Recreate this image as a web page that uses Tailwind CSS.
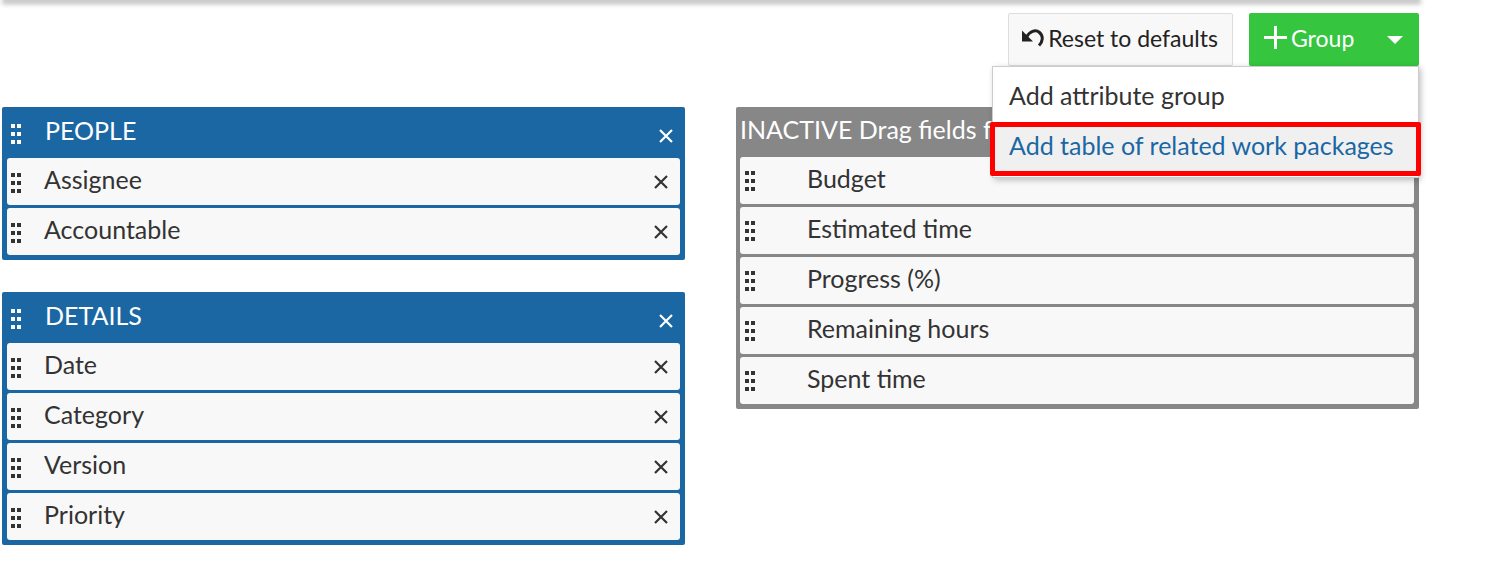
<!DOCTYPE html>
<html lang="en">
<head>
<meta charset="utf-8">
<title>Form configuration</title>
<script src="https://cdn.jsdelivr.net/npm/@tailwindcss/browser@4"></script>
</head>
<body class="bg-white font-['Lato',sans-serif] text-[25px] leading-[30px] text-[#333333]">
<svg class="hidden" aria-hidden="true">
  <symbol id="grip" viewBox="0 0 10 20"><path fill="currentColor" d="M0 0h4v4H0zM6 0h4v4H6zM0 8h4v4H0zM6 8h4v4H6zM0 16h4v4H0zM6 16h4v4H6z"/></symbol>
  <symbol id="close" viewBox="0 0 14 14"><path d="M1 1l12 12M13 1L1 13" fill="none" stroke="currentColor" stroke-width="2.2"/></symbol>
</svg>
<div class="ml-1 mr-[81px] h-px bg-[#cccccc] shadow-[0_1px_5px_2px_rgba(0,0,0,0.28)]"></div>
<main class="pl-[2px] pr-[81px] pt-3">
  <div class="flex justify-end gap-4">
    <button class="flex h-[53px] items-center gap-1 rounded-xs border border-[#dddddd] bg-[#f8f8f8] pl-[13px] pr-[14px] pb-1 text-[23px] text-[#222222]">
      <svg class="h-[18px] w-[22px]" viewBox="0 0 22 18" aria-hidden="true"><path d="M0 1.500V12.500H11z" fill="currentColor"/><path d="M4.500 8C7.500 2.500 13.500 0 17.500 3.500C21.500 7 21 12.500 17 16.500" fill="none" stroke="currentColor" stroke-width="3"/></svg>
      Reset to defaults
    </button>
    <div class="relative">
      <button class="flex h-[53px] w-[170px] items-center rounded-xs bg-[#35c53f] px-[15px] pb-1 text-[23px] text-white" aria-haspopup="menu" aria-expanded="true">
        <svg class="mr-1 size-[23px]" viewBox="0 0 23 23" aria-hidden="true"><path d="M11.500 0v23M0 11.500h23" stroke="currentColor" stroke-width="3"/></svg>
        Group
        <svg class="ml-auto mr-px mt-1 h-2 w-4" viewBox="0 0 16 8" aria-hidden="true"><path d="M0 0h16L8 8z" fill="currentColor"/></svg>
      </button>
      <div role="menu" class="absolute right-0 top-full z-10 w-[427px] border border-[#cccccc] bg-white pb-px shadow-[2px_2px_6px_rgba(0,0,0,0.25)]">
        <button role="menuitem" class="block h-[55px] w-full whitespace-nowrap px-4 pb-px pt-[2px] text-left">Add attribute group</button>
        <button role="menuitem" class="-mx-[3px] block h-[54px] w-[431px] whitespace-nowrap rounded-xs border-[5px] border-[#ff0000] bg-[#f0f0f0] px-[14px] pb-2 text-left text-[#1a67a3]">Add table of related work packages</button>
      </div>
    </div>
  </div>
  <div class="mt-[41px] grid grid-cols-2 items-start gap-[51px]">
    <div class="flex flex-col gap-8">
      <section class="rounded-xs bg-[#1a67a3] px-[5px] pb-[5px]">
        <header class="flex h-[51px] items-center pl-1 pr-[7px] text-white">
          <svg class="mt-[3px] h-5 w-[10px]"><use href="#grip"/></svg>
          <h2 class="ml-6 mb-[6px]">PEOPLE</h2>
          <button class="ml-auto mt-[6px]" aria-label="Remove group People"><svg class="size-[14px]"><use href="#close"/></svg></button>
        </header>
        <ul class="flex flex-col gap-[3px]">
          <li class="flex h-[47px] items-center rounded-[3px] bg-[#f8f8f8] pl-1 pr-3"><svg class="mt-[3px] h-5 w-[10px]"><use href="#grip"/></svg><span class="ml-[23px] mb-[6px]">Assignee</span><button class="ml-auto" aria-label="Remove Assignee"><svg class="size-[14px]"><use href="#close"/></svg></button></li>
          <li class="flex h-[47px] items-center rounded-[3px] bg-[#f8f8f8] pl-1 pr-3"><svg class="mt-[3px] h-5 w-[10px]"><use href="#grip"/></svg><span class="ml-[23px] mb-[6px]">Accountable</span><button class="ml-auto" aria-label="Remove Accountable"><svg class="size-[14px]"><use href="#close"/></svg></button></li>
        </ul>
      </section>
      <section class="rounded-xs bg-[#1a67a3] px-[5px] pb-[5px]">
        <header class="flex h-[51px] items-center pl-1 pr-[7px] text-white">
          <svg class="mt-[3px] h-5 w-[10px]"><use href="#grip"/></svg>
          <h2 class="ml-6 mb-[6px]">DETAILS</h2>
          <button class="ml-auto mt-[6px]" aria-label="Remove group Details"><svg class="size-[14px]"><use href="#close"/></svg></button>
        </header>
        <ul class="flex flex-col gap-[3px]">
          <li class="flex h-[47px] items-center rounded-[3px] bg-[#f8f8f8] pl-1 pr-3"><svg class="mt-[3px] h-5 w-[10px]"><use href="#grip"/></svg><span class="ml-[23px] mb-[6px]">Date</span><button class="ml-auto" aria-label="Remove Date"><svg class="size-[14px]"><use href="#close"/></svg></button></li>
          <li class="flex h-[47px] items-center rounded-[3px] bg-[#f8f8f8] pl-1 pr-3"><svg class="mt-[3px] h-5 w-[10px]"><use href="#grip"/></svg><span class="ml-[23px] mb-[6px]">Category</span><button class="ml-auto" aria-label="Remove Category"><svg class="size-[14px]"><use href="#close"/></svg></button></li>
          <li class="flex h-[47px] items-center rounded-[3px] bg-[#f8f8f8] pl-1 pr-3"><svg class="mt-[3px] h-5 w-[10px]"><use href="#grip"/></svg><span class="ml-[23px] mb-[6px]">Version</span><button class="ml-auto" aria-label="Remove Version"><svg class="size-[14px]"><use href="#close"/></svg></button></li>
          <li class="flex h-[47px] items-center rounded-[3px] bg-[#f8f8f8] pl-1 pr-3"><svg class="mt-[3px] h-5 w-[10px]"><use href="#grip"/></svg><span class="ml-[23px] mb-[6px]">Priority</span><button class="ml-auto" aria-label="Remove Priority"><svg class="size-[14px]"><use href="#close"/></svg></button></li>
        </ul>
      </section>
    </div>
    <section class="rounded-xs bg-[#878787] pb-[5px] pl-1 pr-[5px]">
      <header class="flex h-[50px] items-center overflow-hidden whitespace-nowrap pb-[6px] text-white"><h2>INACTIVE Drag fields from</h2></header>
      <ul class="flex flex-col gap-[3px]">
        <li class="flex h-[47px] items-center rounded-[3px] bg-[#f8f8f8] pl-[5px]"><svg class="mt-px h-5 w-[10px]"><use href="#grip"/></svg><span class="ml-[52px] mb-[6px]">Budget</span></li>
        <li class="flex h-[47px] items-center rounded-[3px] bg-[#f8f8f8] pl-[5px]"><svg class="mt-px h-5 w-[10px]"><use href="#grip"/></svg><span class="ml-[52px] mb-[6px]">Estimated time</span></li>
        <li class="flex h-[47px] items-center rounded-[3px] bg-[#f8f8f8] pl-[5px]"><svg class="mt-px h-5 w-[10px]"><use href="#grip"/></svg><span class="ml-[52px] mb-[6px]">Progress (%)</span></li>
        <li class="flex h-[47px] items-center rounded-[3px] bg-[#f8f8f8] pl-[5px]"><svg class="mt-px h-5 w-[10px]"><use href="#grip"/></svg><span class="ml-[52px] mb-[6px]">Remaining hours</span></li>
        <li class="flex h-[47px] items-center rounded-[3px] bg-[#f8f8f8] pl-[5px]"><svg class="mt-px h-5 w-[10px]"><use href="#grip"/></svg><span class="ml-[52px] mb-[6px]">Spent time</span></li>
      </ul>
    </section>
  </div>
</main>
</body>
</html>
